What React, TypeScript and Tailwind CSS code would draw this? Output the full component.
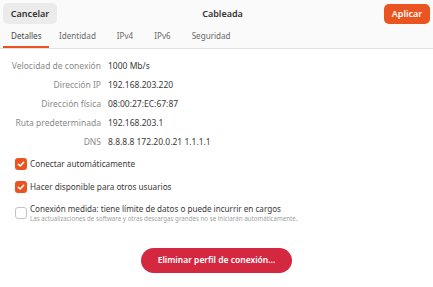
import React from 'react';

const rows = [
  { label: 'Velocidad de conexión', value: '1000 Mb/s' },
  { label: 'Dirección IP', value: '192.168.203.220' },
  { label: 'Dirección física', value: '08:00:27:EC:67:87' },
  { label: 'Ruta predeterminada', value: '192.168.203.1' },
  { label: 'DNS', value: '8.8.8.8 172.20.0.21 1.1.1.1' },
];

const tabs = ['Detalles', 'Identidad', 'IPv4', 'IPv6', 'Seguridad'];

function Check({ checked }: { checked: boolean }) {
  if (!checked) {
    return <div className="w-[12px] h-[12px] rounded-[3px] border border-[#c4c4c4] bg-white shrink-0" />;
  }
  return (
    <div className="w-[12px] h-[12px] rounded-[3px] bg-[#e95420] shrink-0 flex items-center justify-center">
      <svg width="8" height="8" viewBox="0 0 8 8">
        <path d="M1.3 4.2 L3.2 6 L6.7 2.2" stroke="white" strokeWidth="1.5" fill="none" strokeLinecap="round" strokeLinejoin="round" />
      </svg>
    </div>
  );
}

export default function App() {
  return (
    <div className="w-[433px] h-[287px] bg-white text-[#3d3d3d] overflow-hidden" style={{ fontFamily: '"Noto Sans", "Open Sans", sans-serif' }}>
      <div className="bg-[#fafafa] border-b border-[#e2e2e2]">
        <div className="flex items-center justify-between px-[3px] pt-[3px]">
          <button className="h-[21px] w-[54px] rounded-[5px] bg-[#ebebeb] text-[9px] font-semibold text-[#333]">Cancelar</button>
          <div className="text-[9px] font-semibold text-[#333] pl-[4px]">Cableada</div>
          <button className="h-[20px] w-[46px] rounded-[5px] bg-[#e95420] text-[9px] font-semibold text-white">Aplicar</button>
        </div>
        <div className="flex pl-[3px] mt-[2px]">
          {tabs.map((t, i) => (
            <div
              key={t}
              className={
                'h-[22px] flex items-center text-[8.1px] border-b-[2px] ' +
                (i === 0 ? 'pl-[8px] pr-[7px] text-[#4a4a4a] border-[#e95420]' : 'px-[10.5px] text-[#6a6a6a] border-transparent')
              }
            >
              {t}
            </div>
          ))}
        </div>
      </div>

      <div className="pt-[10px] flex flex-col gap-[5px]">
        {rows.map((r) => (
          <div key={r.label} className="flex items-center h-[14px] text-[8.5px]">
            <div className="w-[101px] text-right text-[#8a8a8a]">{r.label}</div>
            <div className="ml-[7px] text-[#3a3a3a]">{r.value}</div>
          </div>
        ))}
      </div>

      <div className="pl-[15px] mt-[8px] flex flex-col">
        <div className="flex items-center gap-[3px] h-[14px] text-[8.2px] text-[#3a3a3a]">
          <Check checked />
          <span>Conectar automáticamente</span>
        </div>
        <div className="flex items-center gap-[3px] h-[14px] mt-[9px] text-[8.2px] text-[#3a3a3a]">
          <Check checked />
          <span>Hacer disponible para otros usuarios</span>
        </div>
        <div className="flex items-center gap-[3px] mt-[8px]">
          <Check checked={false} />
          <div className="flex flex-col">
            <span className="text-[8.1px] text-[#3a3a3a] leading-[13px]">Conexión medida: tiene límite de datos o puede incurrir en cargos</span>
            <span className="text-[6.2px] text-[#a0a0a0] leading-[8px]">Las actualizaciones de software y otras descargas grandes no se iniciarán automáticamente.</span>
          </div>
        </div>
      </div>

      <div className="flex justify-center mt-[25px]">
        <button className="h-[25px] w-[151px] rounded-full bg-[#d3283f] text-white text-[8.5px] font-semibold">
          Eliminar perfil de conexión…
        </button>
      </div>
    </div>
  );
}
